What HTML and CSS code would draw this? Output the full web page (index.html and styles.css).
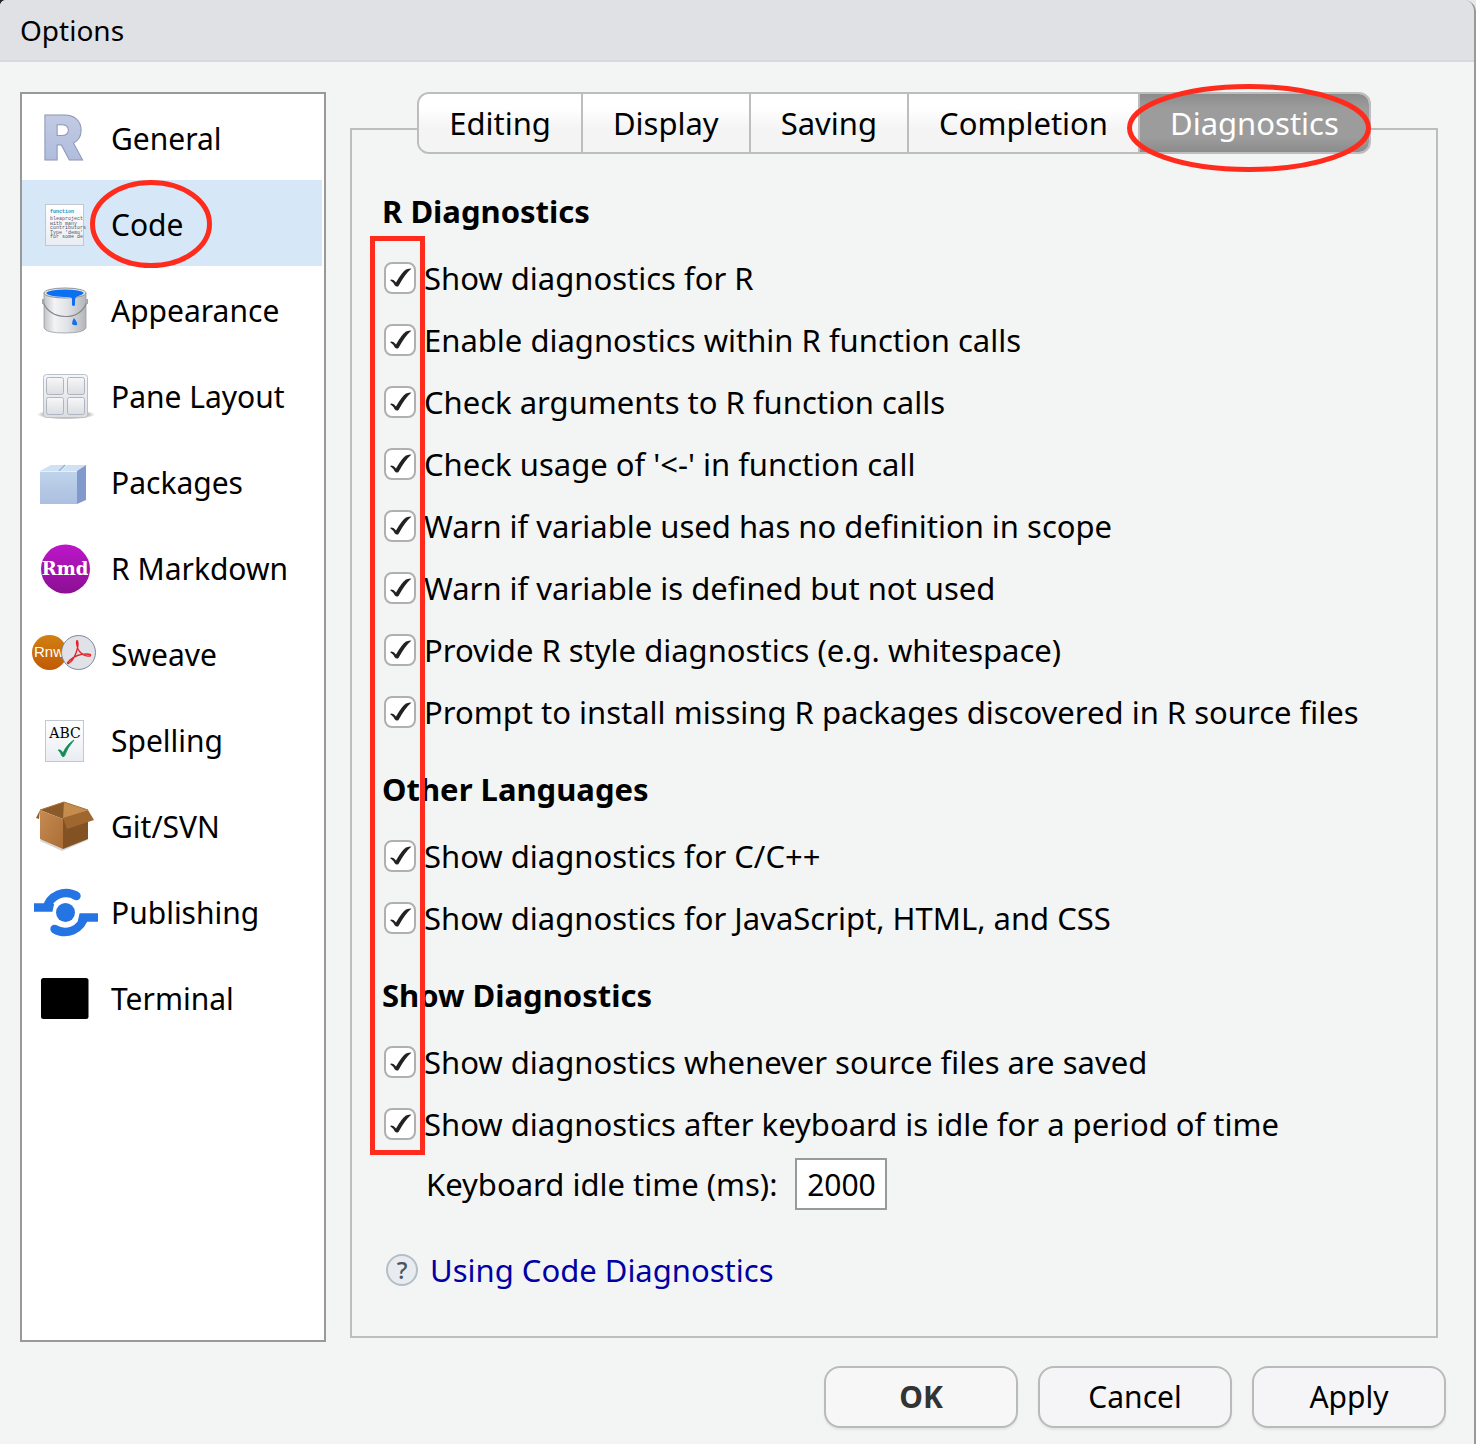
FILE: index.html
```html
<!DOCTYPE html>
<html lang="en">
<head>
<meta charset="utf-8">
<title>Options</title>
<link rel="stylesheet" href="styles.css">
</head>
<body>
<div class="dialog" role="dialog" aria-labelledby="dialog-title">
  <header class="titlebar"><h1 class="title" id="dialog-title">Options</h1></header>
  <div class="content">
    <nav class="sidebar" aria-label="Sections">
      <button class="item" type="button">
        <svg class="icon" viewBox="0 0 72 60" aria-hidden="true">
          <defs><linearGradient id="gR" x1="0" y1="0" x2="0" y2="1"><stop offset="0" stop-color="#c9cfe6"/><stop offset="1" stop-color="#a9b8db"/></linearGradient></defs>
          <text class="icon-r" x="13" y="53" fill="url(#gR)" stroke="#8e99b5">R</text>
        </svg>
        <span class="name">General</span>
      </button>
      <button class="item selected" type="button">
        <svg class="icon" viewBox="0 0 72 60" aria-hidden="true">
          <defs><linearGradient id="gPage" x1="0" y1="0" x2="0" y2="1"><stop offset="0" stop-color="#fff"/><stop offset="1" stop-color="#e9edf3"/></linearGradient></defs>
          <rect x="16.500" y="11.500" width="38" height="41" fill="url(#gPage)" stroke="#c3c8d0"/>
          <g class="icon-code">
            <text class="icon-keyword" x="21" y="20">function</text>
            <text x="21" y="27">bleaproject</text>
            <text x="21" y="32">with many</text>
            <text x="21" y="36">contributors</text>
            <text x="21" y="41">Type 'demo'</text>
            <text x="21" y="45">for some de</text>
          </g>
        </svg>
        <span class="name mark">Code
          <svg class="ring ring-code" viewBox="0 0 122 88" aria-hidden="true"><ellipse cx="61" cy="44" rx="58.500" ry="41.500"/></svg>
        </span>
      </button>
      <button class="item" type="button">
        <svg class="icon" viewBox="0 0 72 60" aria-hidden="true">
          <defs><linearGradient id="gCan" x1="0" x2="1" y1="0" y2="0"><stop offset="0" stop-color="#c2c4c8"/><stop offset=".25" stop-color="#f3f3f5"/><stop offset=".55" stop-color="#e2e3e6"/><stop offset="1" stop-color="#b3b5ba"/></linearGradient></defs>
          <path d="M15 14V49Q17 54 36 54T57 49V14Z" fill="url(#gCan)" stroke="#9a9ca0" stroke-width=".8"/>
          <ellipse cx="36" cy="14" rx="21" ry="5" fill="#e8eaee" stroke="#8f9195"/>
          <path d="M17 14Q20 10.500 36 10.500T55 14Q52 17 48 17.500Q46 18 46 21V26Q44.500 28 43 26V20Q43 18 40 18Q20 18 17 14Z" fill="#0a6ff0"/>
          <path d="M45 39Q49 44 48 46Q45 47 43 45Q43 42 45 39Z" fill="#1671e8"/>
          <path d="M14 23Q20 37 36 37.500T58 23" fill="none" stroke="#85878b" stroke-width="1.200"/>
          <path d="M14 20V25M58 20V25" stroke="#a5a7ab" stroke-width="2"/>
        </svg>
        <span class="name">Appearance</span>
      </button>
      <button class="item" type="button">
        <svg class="icon" viewBox="0 0 72 60" aria-hidden="true">
          <defs><radialGradient id="gShadow"><stop offset=".6" stop-color="#8d8d90"/><stop offset="1" stop-color="#8d8d90" stop-opacity="0"/></radialGradient>
          <linearGradient id="gPane" x1="0" y1="0" x2="0" y2="1"><stop offset="0" stop-color="#f6f7f8"/><stop offset="1" stop-color="#dcdde1"/></linearGradient></defs>
          <ellipse cx="37" cy="49.500" rx="29" ry="5" fill="url(#gShadow)"/>
          <rect x="14.500" y="9.500" width="44" height="43" rx="3" fill="url(#gPane)" stroke="#b9c0ca"/>
          <g fill="url(#gPane)" stroke="#aeb5c0"><rect x="17.500" y="12.500" width="17" height="17" rx="2"/><rect x="38.500" y="12.500" width="17" height="17" rx="2"/><rect x="17.500" y="32.500" width="17" height="17" rx="2"/><rect x="38.500" y="32.500" width="17" height="17" rx="2"/></g>
        </svg>
        <span class="name">Pane Layout</span>
      </button>
      <button class="item" type="button">
        <svg class="icon" viewBox="0 0 72 60" aria-hidden="true">
          <defs><linearGradient id="gBox" x1="0" y1="0" x2="0" y2="1"><stop offset="0" stop-color="#bfd4ec"/><stop offset="1" stop-color="#acbfdf"/></linearGradient></defs>
          <path d="M11 20L22 14H57L48 20Z" fill="#cfe1f3"/>
          <path d="M48 20L57 14V49L48 53Z" fill="#8299cb"/>
          <path d="M11 20H48V53H11Z" fill="url(#gBox)"/>
          <path d="M30 20L36 14" stroke="#9ab4d3" stroke-width="1.500"/><path d="M32 20L38 14M11 20.500H48" stroke="#e6f0fa" stroke-width="1"/>
        </svg>
        <span class="name">Packages</span>
      </button>
      <button class="item" type="button">
        <svg class="icon" viewBox="0 0 72 60" aria-hidden="true">
          <defs><linearGradient id="gRmd" x1="0" y1="0" x2="0" y2="1"><stop offset="0" stop-color="#bd16c9"/><stop offset="1" stop-color="#8b0f93"/></linearGradient></defs>
          <circle cx="36.500" cy="32" r="24.500" fill="url(#gRmd)"/>
          <text class="icon-rmd" x="36" y="38">Rmd</text>
        </svg>
        <span class="name">R Markdown</span>
      </button>
      <button class="item" type="button">
        <svg class="icon" viewBox="0 0 72 60" aria-hidden="true">
          <defs><linearGradient id="gRnw" x1="0" y1="0" x2="0" y2="1"><stop offset="0" stop-color="#d28013"/><stop offset="1" stop-color="#c05a05"/></linearGradient></defs>
          <circle cx="20.500" cy="29.500" r="17.500" fill="url(#gRnw)"/>
          <text class="icon-rnw" x="5" y="34">Rnw</text>
          <circle cx="49.500" cy="29.500" r="17" fill="#e0e2e8" stroke="#7e879a"/>
          <path d="M48.500 18C47 16 47 25 51 29Q56 34 61 33Q63 31 57 31Q48 31 41 37Q37 41 39.500 40.500Q44 38 47 30Q50 22 48.500 18Z" fill="none" stroke="#e2252b" stroke-width="1.400"/>
        </svg>
        <span class="name">Sweave</span>
      </button>
      <button class="item" type="button">
        <svg class="icon" viewBox="0 0 72 60" aria-hidden="true">
          <rect x="16.500" y="11.500" width="38" height="41" fill="url(#gPage)" stroke="#c3c8d0"/>
          <text class="icon-abc" x="36" y="29">ABC</text>
          <path d="M29 41Q32 40 34 44Q38 35 45 31Q38 39 35.500 47Q34 48.500 33 47Q31 42 29 41Z" fill="#138a55" stroke="#138a55" stroke-width=".8"/>
        </svg>
        <span class="name">Spelling</span>
      </button>
      <button class="item" type="button">
        <svg class="icon" viewBox="0 0 72 60" aria-hidden="true">
          <defs><linearGradient id="gCart" x1="0" y1="0" x2="1" y2="1"><stop offset="0" stop-color="#c68b52"/><stop offset="1" stop-color="#a96d35"/></linearGradient></defs>
          <path d="M11 46L33 56L59 45L56 40H14Z" fill="#999" opacity=".4"/>
          <path d="M11 15L35 7V22L34 24Z" fill="#8a5a28"/><path d="M35 7L59 15L34 24Z" fill="#c58c4e"/>
          <path d="M11 15L34 24V54L11 44Z" fill="url(#gCart)"/>
          <path d="M34 24L59 16V44L34 54Z" fill="#835222"/>
          <path d="M11 15L7 23L10 24Z" fill="#915e2c"/>
          <path d="M34 23L59 15L65 25L38 34Z" fill="#a0662f"/>
          <path d="M11 15L35 7L59 15" fill="none" stroke="#a7713c"/>
        </svg>
        <span class="name">Git/SVN</span>
      </button>
      <button class="item" type="button">
        <svg class="icon" viewBox="0 0 72 60" aria-hidden="true">
          <g fill="none" stroke="#2474e3" stroke-width="8.500">
            <path d="M5 26.500H20L21 22"/><path d="M17.500 28A20 20 0 0 1 47.500 15"/><path d="M53 41L54 36.500H69"/><path d="M55.500 35A20 20 0 0 1 25.500 48"/>
          </g>
          <g fill="#2474e3"><circle cx="36.500" cy="31.500" r="9.500"/><circle cx="47.500" cy="15" r="4.200"/><circle cx="25.500" cy="48" r="4.200"/></g>
        </svg>
        <span class="name">Publishing</span>
      </button>
      <button class="item" type="button">
        <svg class="icon" viewBox="0 0 72 60" aria-hidden="true"><rect x="12" y="11" width="47.500" height="41" rx="2.500"/></svg>
        <span class="name">Terminal</span>
      </button>
    </nav>

    <main class="main">
      <div class="tabs" role="tablist">
        <button class="tab" type="button" role="tab">Editing</button>
        <button class="tab" type="button" role="tab">Display</button>
        <button class="tab" type="button" role="tab">Saving</button>
        <button class="tab" type="button" role="tab">Completion</button>
        <button class="tab active" type="button" role="tab" aria-selected="true">Diagnostics</button>
        <svg class="ring ring-tab" viewBox="0 0 244 88" aria-hidden="true"><ellipse cx="122" cy="44" rx="119.500" ry="41.500"/></svg>
      </div>
      <section class="panel" role="tabpanel">
        <h2 class="heading">R Diagnostics</h2>
        <label class="row"><input class="check" type="checkbox" checked>Show diagnostics for R</label>
        <label class="row"><input class="check" type="checkbox" checked>Enable diagnostics within R function calls</label>
        <label class="row"><input class="check" type="checkbox" checked>Check arguments to R function calls</label>
        <label class="row"><input class="check" type="checkbox" checked>Check usage of '&lt;-' in function call</label>
        <label class="row"><input class="check" type="checkbox" checked>Warn if variable used has no definition in scope</label>
        <label class="row"><input class="check" type="checkbox" checked>Warn if variable is defined but not used</label>
        <label class="row"><input class="check" type="checkbox" checked>Provide R style diagnostics (e.g. whitespace)</label>
        <label class="row"><input class="check" type="checkbox" checked>Prompt to install missing R packages discovered in R source files</label>
        <h2 class="heading">Other Languages</h2>
        <label class="row"><input class="check" type="checkbox" checked>Show diagnostics for C/C++</label>
        <label class="row"><input class="check" type="checkbox" checked>Show diagnostics for JavaScript, HTML, and CSS</label>
        <h2 class="heading">Show Diagnostics</h2>
        <label class="row"><input class="check" type="checkbox" checked>Show diagnostics whenever source files are saved</label>
        <label class="row"><input class="check" type="checkbox" checked>Show diagnostics after keyboard is idle for a period of time</label>
        <div class="idle">
          <label for="idle-time">Keyboard idle time (ms):</label>
          <input class="number" id="idle-time" type="text" value="2000">
        </div>
        <div class="help">
          <span class="help-icon" aria-hidden="true">?</span>
          <a class="link" href="#">Using Code Diagnostics</a>
        </div>
        <div class="outline"></div>
      </section>
    </main>
  </div>
  <footer class="footer">
    <button class="button primary" type="button">OK</button>
    <button class="button" type="button">Cancel</button>
    <button class="button" type="button">Apply</button>
  </footer>
</div>
</body>
</html>
```
FILE: styles.css
```css
* { box-sizing: border-box; }

body {
  margin: 0;
  background: linear-gradient(to right, #222 50%, #e8e8e8 50%);
  color: #000;
  font: 30px/40px "Noto Sans", "Open Sans", sans-serif;
}

button, input { font: inherit; color: inherit; }

.dialog {
  display: flex;
  flex-direction: column;
  min-height: 100vh;
  background: #f3f5f4;
  border-right: 2px solid #999;
  border-radius: 6px 12px 0 0;
  overflow: hidden;
}

.titlebar {
  display: flex;
  align-items: center;
  height: 62px;
  padding: 0 20px;
  background: #e0e1e5;
  border-bottom: 2px solid #d7d9de;
}
.title { margin: 0; font-size: 28px; font-weight: 400; }

.content {
  display: flex;
  flex: 1;
  gap: 24px;
  padding: 30px 36px 0 20px;
}

.sidebar {
  flex: 0 0 306px;
  padding-right: 2px;
  background: #fff;
  border: 2px solid #999;
}
.item {
  display: flex;
  align-items: center;
  gap: 10px;
  width: 100%;
  height: 86px;
  padding: 0 0 0 7px;
  background: none;
  border: 0;
  text-align: left;
  white-space: nowrap;
}
.item.selected { background: #d6e8f7; }
.name { padding-top: 4px; }
.icon { flex: none; width: 72px; height: 60px; overflow: visible; }
.icon-r { font: 900 62px Inter, sans-serif; }
.icon-code { font: 5px "Liberation Mono", monospace; fill: #556; }
.icon-keyword { font-weight: bold; fill: #1397c4; }
.icon-rmd { font: bold 18px "DejaVu Serif", serif; fill: #fff; text-anchor: middle; }
.icon-rnw { font: 15px "Liberation Sans", sans-serif; fill: #fff; }
.icon-abc { font: 14px "DejaVu Serif", serif; text-anchor: middle; }

.mark { position: relative; }
.ring { position: absolute; fill: none; stroke: #ff2b1c; stroke-width: 5px; pointer-events: none; }
.ring-code { left: -21px; top: -21px; width: 122px; height: 88px; }
.ring-tab { right: -2px; top: -10px; width: 244px; height: 88px; }

.main { display: flex; flex: 1; flex-direction: column; min-width: 0; padding-bottom: 4px; font-size: 31px; }
.tabs {
  position: relative;
  z-index: 1;
  display: flex;
  align-self: center;
  height: 62px;
  border: 2px solid #bdbdbd;
  border-radius: 12px;
}
.tab {
  padding: 0 30px;
  background: linear-gradient(#fff 25%, #f4f4f5 60%);
  border: 0;
  border-right: 2px solid #bdbdbd;
}
.tab:first-child { border-radius: 10px 0 0 10px; }
.tab.active {
  background: linear-gradient(#8c8c8c, #9c9c9c 25%, #9c9c9c 75%, #8c8c8c);
  border-right: 0;
  border-radius: 0 10px 10px 0;
  color: #fff;
}

.panel {
  position: relative;
  flex: 1;
  margin-top: -26px;
  padding: 34px 30px 46px;
  border: 2px solid #bdbdbd;
}
.heading { margin: 26px 0 16px; font-size: 31px; font-weight: 700; line-height: 40px; }
.heading:first-child { margin-top: 27px; }
.row { display: flex; align-items: center; gap: 8px; height: 62px; padding-left: 2px; }
.check {
  flex: none;
  appearance: none;
  width: 32px;
  height: 32px;
  margin: 0;
  background: #fff;
  border: 2px solid #b0b0b0;
  border-radius: 8px;
}
.check:checked {
  background: #fff url("data:image/svg+xml,%3Csvg xmlns='http://www.w3.org/2000/svg' viewBox='0 0 28 28'%3E%3Cpath d='M4 16Q7 14.500 10 18.500Q16 8 20 5.500Q23 4.500 25.500 4.500Q19 10 12.500 22Q10.500 23.500 8.500 21Q7.500 18.500 4 16Z' fill='%23222'/%3E%3C/svg%3E") center / 28px 28px;
}
.outline {
  position: absolute;
  left: 18px;
  top: 106px;
  width: 55px;
  height: 919px;
  border: 5px solid #ff2b1c;
  pointer-events: none;
}
.idle { display: flex; align-items: center; gap: 18px; margin-top: 3px; padding-left: 44px; }
.number {
  width: 92px;
  height: 52px;
  padding: 0 9px;
  background: #fff;
  border: 2px solid #999;
  border-radius: 0;
  font-size: 30px;
  text-align: center;
}
.help { display: flex; align-items: center; gap: 12px; margin-top: 40px; padding-left: 4px; }
.help-icon {
  width: 32px;
  height: 32px;
  background: #e8ecf0;
  border: 2px solid #b3bfc8;
  border-radius: 50%;
  color: #4b5560;
  font-size: 24px;
  font-weight: 500;
  line-height: 28px;
  text-align: center;
}
.link { color: #0000a5; text-decoration: none; }

.footer {
  display: flex;
  justify-content: flex-end;
  gap: 20px;
  padding: 24px 28px 16px;
}
.button {
  width: 194px;
  height: 62px;
  padding: 0;
  background: #f5f5f8;
  border: 2px solid #bababa;
  border-radius: 16px;
  box-shadow: 0 2px 2px #e3e5e4;
}
.primary { background: #f7f7f7; color: #333; font-weight: 700; }
```
